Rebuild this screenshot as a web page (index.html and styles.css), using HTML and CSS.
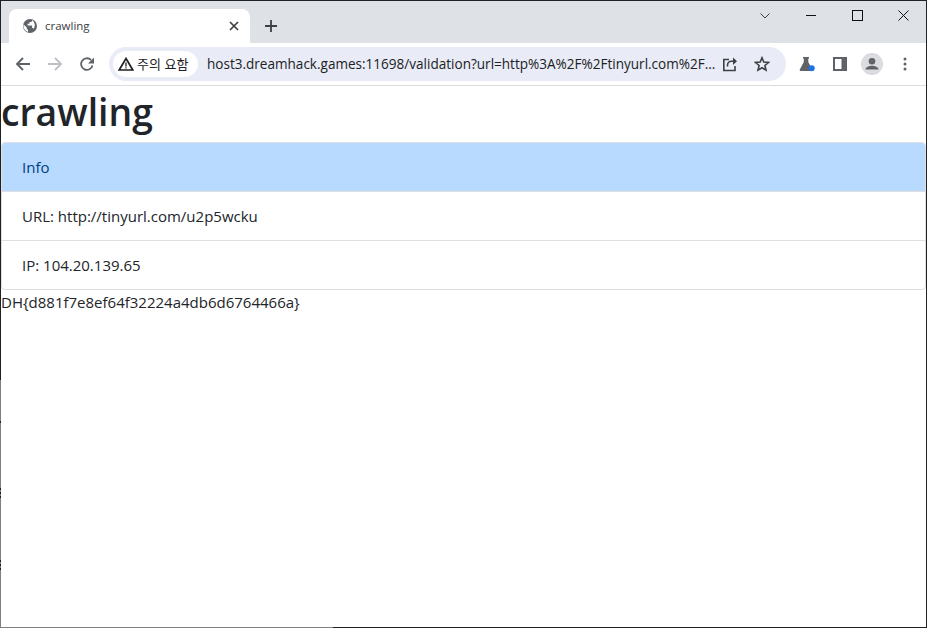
FILE: index.html
```html
<!DOCTYPE html>
<html lang="ko">
<head>
<meta charset="utf-8">
<title>crawling</title>
<link rel="stylesheet" href="styles.css">
</head>
<body>
<div class="window">
  <div class="tabstrip">
    <div class="tab">
      <svg class="favicon" width="16" height="16" viewBox="0 0 16 16"><circle cx="8" cy="8" r="7" fill="#5f6368"/><path d="M1.600 6.400 4.800 9.600V10.600c0 .7.600 1.200 1.200 1.200v2.200A6.300 6.300 0 0 1 1.600 6.400Z M10 2.100v.6c0 .7-.6 1.300-1.300 1.300H7.500v1.200c0 .4-.3.6-.6.6H5.600V7.400h3.900c.4 0 .6.300.6.6V10h.6c.5 0 1 .4 1.100.9a6.300 6.300 0 0 0-1.800-8.800Z" fill="#fff"/></svg>
      <span class="tab-title">crawling</span>
      <svg class="tab-close" width="10" height="10" viewBox="0 0 10 10"><path d="M1 1l8 8M9 1 1 9" stroke="#3c4043" stroke-width="1.700" fill="none"/></svg>
    </div>
    <svg class="new-tab" width="12" height="12" viewBox="0 0 12 12"><path d="M6 0v12M0 6h12" stroke="#3c4043" stroke-width="1.800" fill="none"/></svg>
    <div class="caption">
      <svg class="cap-chevron" width="10" height="6" viewBox="0 0 10 6"><path d="M.5.500 5 5 9.500.5" stroke="#3c4043" stroke-width="1" fill="none"/></svg>
      <svg class="cap-min" width="10" height="11" viewBox="0 0 10 11"><path d="M0 5.500h10" stroke="#111" stroke-width="1" fill="none"/></svg>
      <svg class="cap-max" width="11" height="11" viewBox="0 0 11 11"><rect x=".5" y=".5" width="10" height="10" stroke="#111" fill="none"/></svg>
      <svg class="cap-close" width="11" height="11" viewBox="0 0 11 11"><path d="M.5.500l10 10M10.500.500l-10 10" stroke="#111" stroke-width="1" fill="none"/></svg>
    </div>
  </div>
  <div class="toolbar">
    <svg class="nav-back" width="16" height="16" viewBox="0 0 16 16"><path d="M15 8H2M8 2 2 8l6 6" stroke="#5f6368" stroke-width="1.900" fill="none"/></svg>
    <svg class="nav-forward" width="16" height="16" viewBox="0 0 16 16"><path d="M1 8h13M8 2l6 6-6 6" stroke="#bdc1c6" stroke-width="1.900" fill="none"/></svg>
    <svg class="nav-reload" width="16" height="16" viewBox="0 0 16 16"><path d="M13.500 9.500A5.800 5.800 0 1 1 12 4" stroke="#5f6368" stroke-width="1.800" fill="none"/><path d="M15 1.500v6H9Z" fill="#5f6368"/></svg>
    <div class="omnibox">
      <div class="chip">
        <svg width="16" height="14" viewBox="0 0 16 14"><path d="M8 1.500 14.800 13H1.200Z" stroke="#202124" stroke-width="1.700" fill="none"/><path d="M8 5.500V9.500M8 10.300v1.300" stroke="#202124" stroke-width="1.300"/></svg>
        <span class="chip-text">주의 요함</span>
      </div>
      <span class="url">host3.dreamhack.games:11698/validation?url=http%3A%2F%2Ftinyurl.com%2F...</span>
      <svg class="share" width="16" height="16" viewBox="0 0 16 16"><path d="M7 3.500H1.800V14.500H13V10" stroke="#3c4043" stroke-width="1.600" fill="none"/><path d="M5.500 10.500V9c0-2.200 1.800-3.800 4-3.800h3" stroke="#3c4043" stroke-width="1.600" fill="none"/><path d="M11 1.500 15 5.200 11 9Z" fill="#3c4043"/></svg>
      <svg class="star" width="16" height="16" viewBox="0 0 16 16"><path d="M8 1.800l1.800 4.300 4.700.4-3.600 3 1.100 4.600L8 11.700l-4 2.400 1.100-4.600-3.600-3 4.700-.4Z" stroke="#3c4043" stroke-width="1.600" fill="none"/></svg>
    </div>
    <div class="actions">
      <svg class="flask" width="16" height="16" viewBox="0 0 16 16"><path d="M4 1h6v1.500H9.300V6l4 7.500c.3.700 0 1.500-.9 1.500H1.700c-.9 0-1.200-.8-.9-1.500L4.800 6V2.500H4Z" fill="#5f6368"/><circle cx="12.700" cy="12.300" r="3" fill="#1a73e8"/></svg>
      <svg class="sidepanel" width="14" height="14" viewBox="0 0 14 14"><path d="M0 0h14v14H0Z M2 2v10h6.500V2Z" fill="#5f6368" fill-rule="evenodd"/></svg>
      <svg class="avatar" width="22" height="22" viewBox="0 0 22 22"><circle cx="11" cy="11" r="11" fill="#dadce0"/><circle cx="11" cy="8.300" r="3.300" fill="#5f6368"/><path d="M4.500 16.500c0-2.500 4-3.700 6.500-3.700s6.500 1.200 6.500 3.700Z" fill="#5f6368"/></svg>
      <svg class="menu-dots" width="4" height="14" viewBox="0 0 4 14"><circle cx="2" cy="2" r="1.500" fill="#5f6368"/><circle cx="2" cy="7" r="1.500" fill="#5f6368"/><circle cx="2" cy="12" r="1.500" fill="#5f6368"/></svg>
    </div>
  </div>
  <main class="page">
    <h1 class="title">crawling</h1>
    <ul class="list">
      <li class="item item-active">Info</li>
      <li class="item">URL: http://tinyurl.com/u2p5wcku</li>
      <li class="item">IP: 104.20.139.65</li>
    </ul>
    <span class="flag">DH{d881f7e8ef64f32224a4db6d6764466a}</span>
  </main>
</div>
</body>
</html>
```
FILE: styles.css
```css
* { box-sizing: border-box; }
html, body { margin: 0; height: 100%; }
body { font-family: "Open Sans", "Noto Sans", "Noto Sans CJK KR", sans-serif; color: #212529; background: #fff; overflow: hidden; }
.window {
  height: 628px;
  display: flex;
  flex-direction: column;
  padding: 1px;
  background:
    linear-gradient(#202124, #202124) left 421px / 1px 2px no-repeat,
    repeating-linear-gradient(#202124 0 2px, #7f7f7f 2px 4px) left 488px / 1px 10px no-repeat,
    repeating-linear-gradient(#202124 0 2px, #7f7f7f 2px 4px) left 560px / 1px 12px no-repeat,
    linear-gradient(to bottom, #202124 380px, #7f7f7f 380px) left top / 1px 100% no-repeat,
    linear-gradient(#7f7f7f, #7f7f7f) left bottom / 333px 1px no-repeat,
    #202124;
}
.tabstrip {
  height: 42px;
  flex: none;
  display: flex;
  align-items: flex-end;
  background: #dee1e6;
  padding-left: 8px;
  position: relative;
}
.tab {
  width: 241px;
  height: 34px;
  background: #fff;
  border-radius: 8px 8px 0 0;
  display: flex;
  align-items: center;
  padding: 0 11px 0 13px;
}
.favicon { flex: none; }
.tab-title { font-size: 11.500px; color: #3c4043; margin: 0 0 2px 7px; flex: 1; }
.tab-close { flex: none; }
.new-tab { margin: 0 0 11px 15px; flex: none; }
.caption { position: absolute; top: 9px; right: 0; height: 11px; display: flex; align-items: center; }
.cap-chevron { margin-right: 36px; }
.cap-min { margin-right: 36px; }
.cap-max { margin-right: 35px; }
.cap-close { margin-right: 17px; }
.toolbar {
  height: 43px;
  flex: none;
  display: flex;
  align-items: center;
  background: #fff;
  border-bottom: 1px solid #dadce0;
  padding-left: 14px;
}
.nav-forward { margin-left: 16px; }
.nav-reload { margin-left: 16px; }
.omnibox {
  width: 677px;
  height: 34px;
  margin-left: 14px;
  margin-top: -1px;
  background: #e9ecf6;
  border-radius: 17px;
  display: flex;
  align-items: center;
  padding-left: 4px;
}
.chip {
  height: 26px;
  width: 85px;
  background: #fff;
  border-radius: 13px;
  display: flex;
  align-items: center;
  padding-left: 5px;
  flex: none;
}
.chip-text { font-size: 13px; color: #202124; margin-left: 3px; white-space: nowrap; font-family: "Noto Sans CJK KR", sans-serif; }
.url { font-size: 13.550px; color: #202124; margin-left: 9px; white-space: nowrap; width: 508px; flex: none; }
.share { margin-left: 7px; flex: none; }
.star { margin-left: 16px; flex: none; }
.actions { display: flex; align-items: center; margin-left: 13px; }
.sidepanel { margin-left: 18px; }
.avatar { margin-left: 14px; }
.menu-dots { margin-left: 20px; }
.page { flex: 1; background: #fff; min-height: 0; }
.title { margin: 0 0 8px; font-size: 37.300px; line-height: 52px; height: 48px; font-weight: 600; color: #212529; }
.list { list-style: none; margin: 0; padding: 0; border: 1px solid rgba(0,0,0,.125); border-radius: 4px; }
.item { height: 49px; padding: 0 20px; font-size: 15px; line-height: 48px; border-top: 1px solid rgba(0,0,0,.125); }
.item:first-child { height: 48px; border-top: 0; }
.item-active { background: #b8daff; color: #004085; border-radius: 3px 3px 0 0; }
.flag { font-size: 15px; line-height: 24px; display: block; }
```
